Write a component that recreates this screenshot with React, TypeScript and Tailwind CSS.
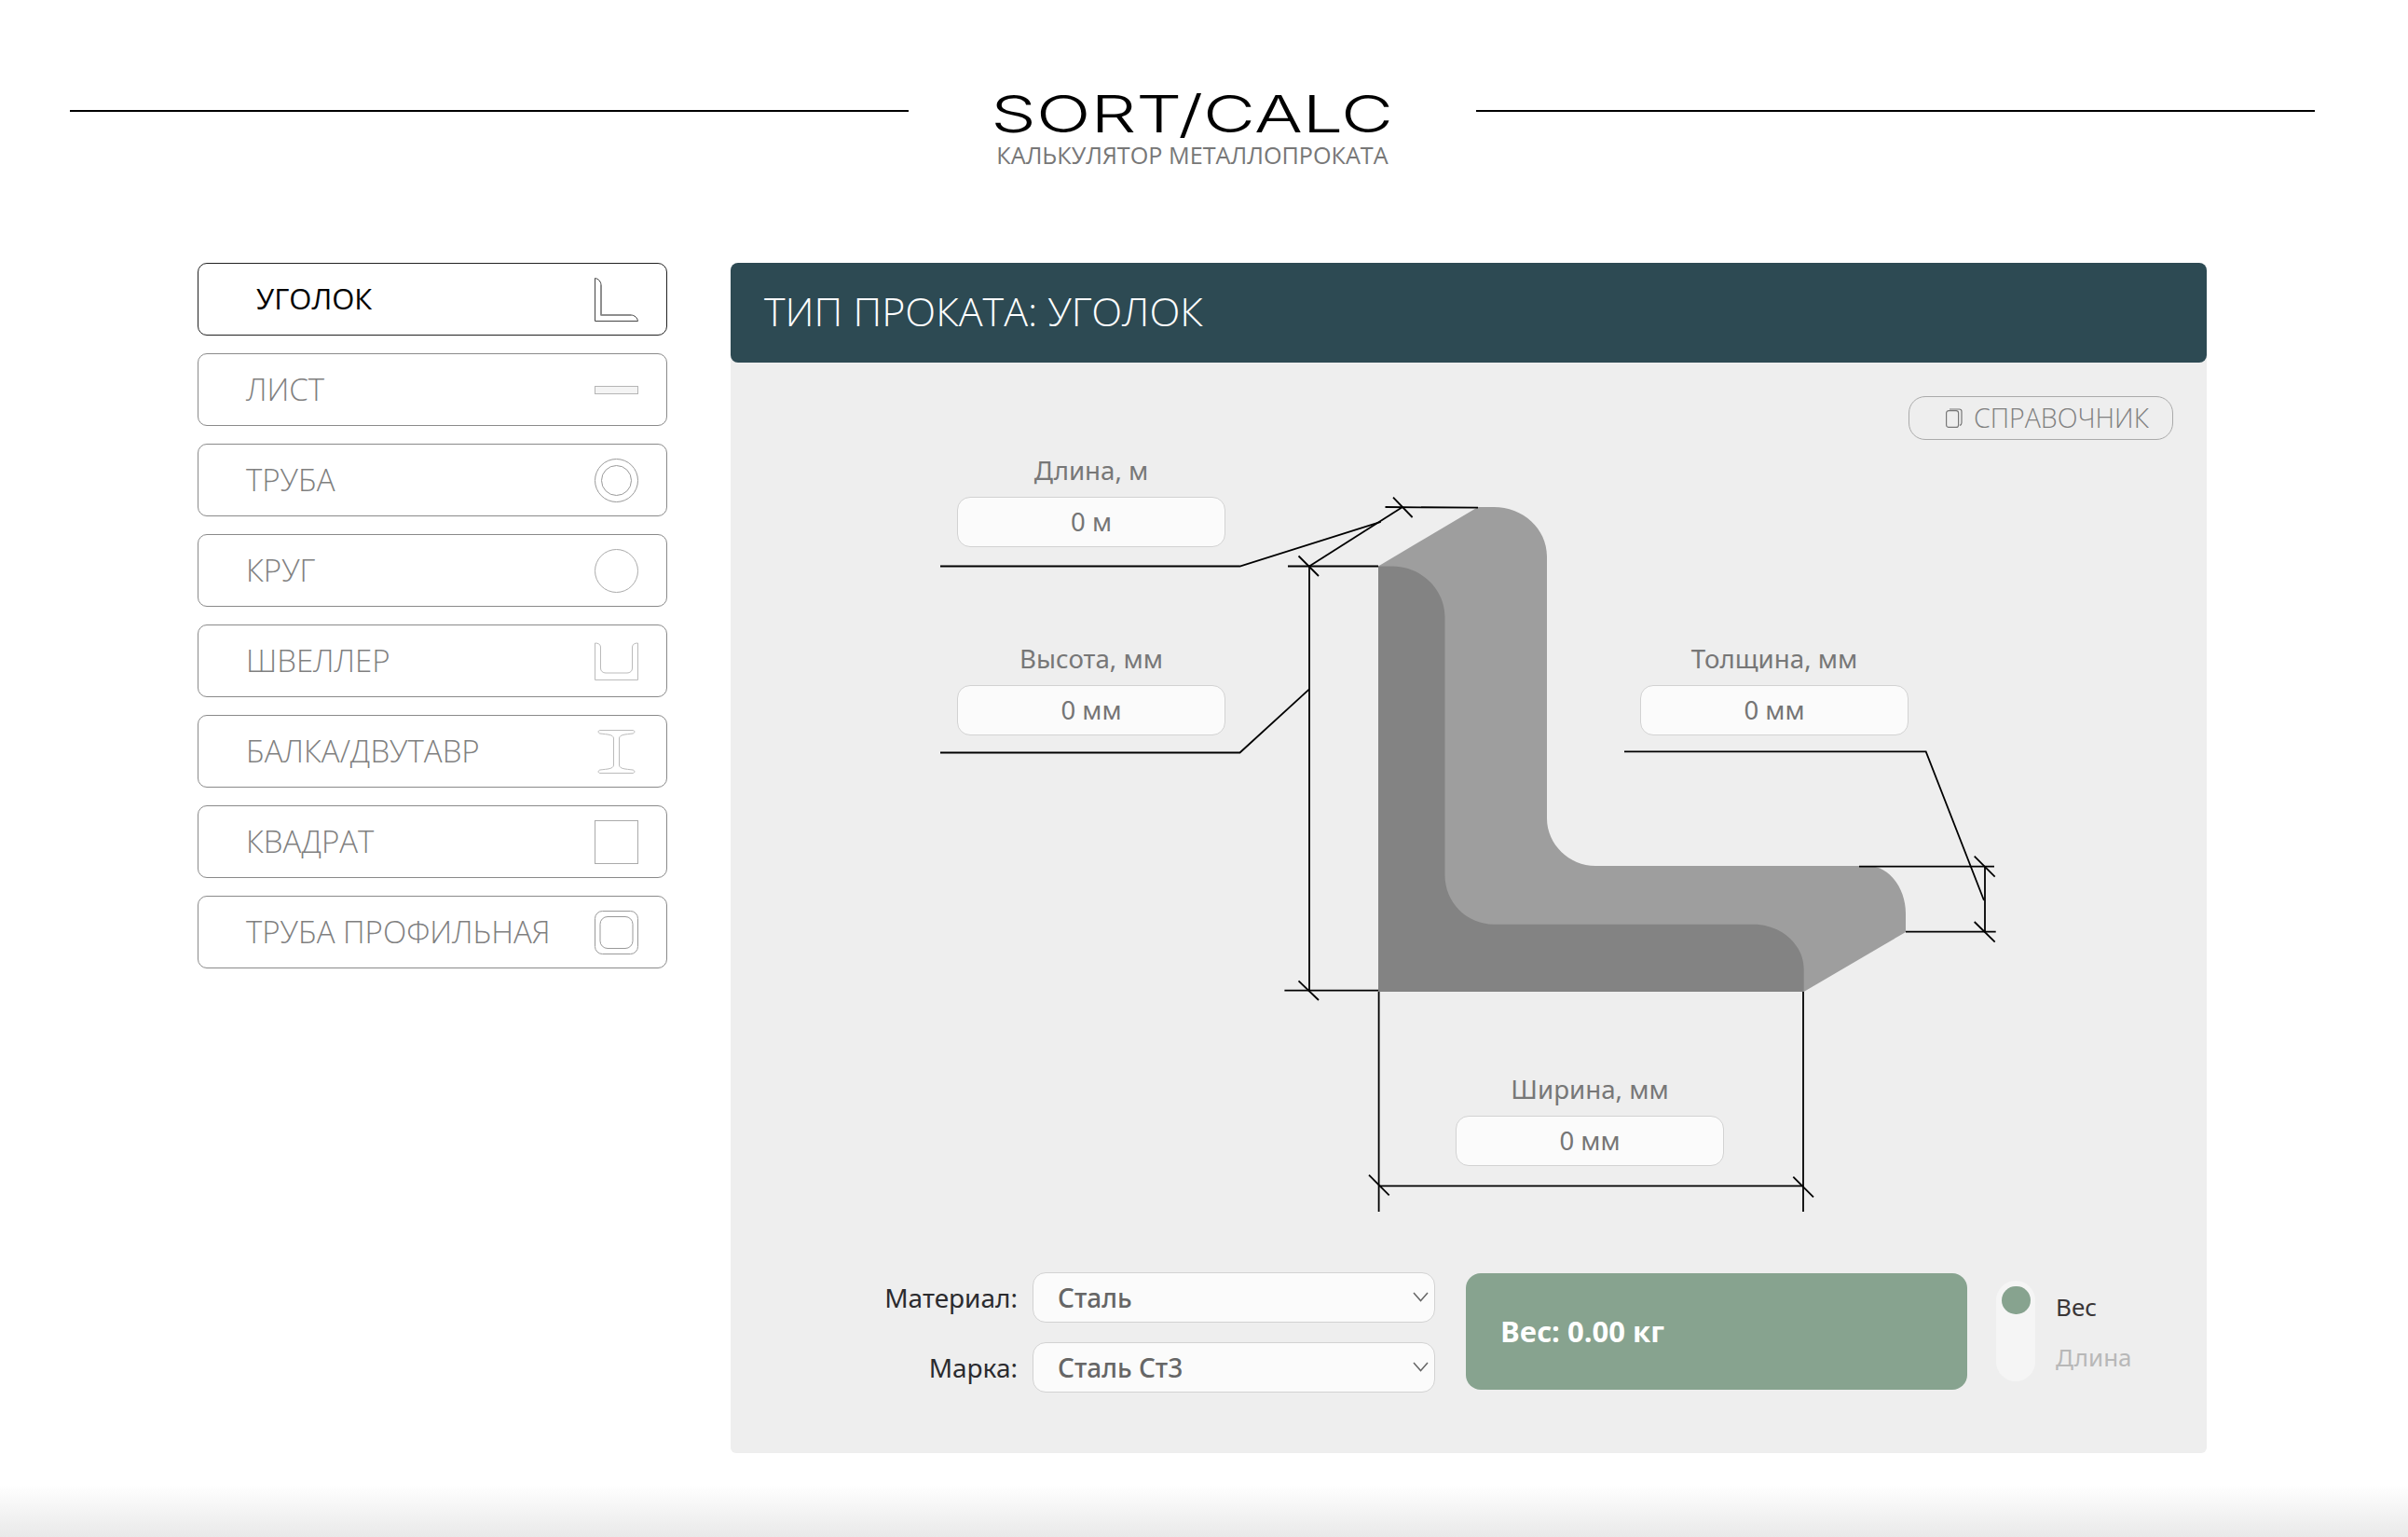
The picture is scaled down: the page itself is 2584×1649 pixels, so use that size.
import { ReactNode } from "react";

const sans = "font-['Open_Sans',sans-serif]";
const ui = "font-['Noto_Sans',sans-serif]";

const AngleIcon = () => (
  <svg width="47" height="47" viewBox="0 0 47 47" fill="none">
    <path d="M.5.5C4 1 7 4 7 8V40H39C43 40 46 43 46.5 46.5H.5Z" stroke="#444" strokeWidth="1" />
    <path d="M7 8V40H39" stroke="#888" strokeWidth="1.5" />
  </svg>
);
const SheetIcon = () => (
  <svg width="47" height="47" viewBox="0 0 47 47" fill="none">
    <rect x=".5" y="19.5" width="46" height="8" fill="#f4f4f4" stroke="#b5b5b5" />
  </svg>
);
const PipeIcon = () => (
  <svg width="47" height="47" viewBox="0 0 47 47" fill="none" stroke="#999">
    <circle cx="23.5" cy="23.5" r="23" />
    <circle cx="23.5" cy="23.5" r="16" />
  </svg>
);
const CircleIcon = () => (
  <svg width="47" height="47" viewBox="0 0 47 47" fill="none" stroke="#aaa">
    <circle cx="23.5" cy="23.5" r="23" />
  </svg>
);
const ChannelIcon = () => (
  <svg width="47" height="47" viewBox="0 0 47 47" fill="none" stroke="#bbb">
    <path d="M.5 4C4 4 6 5 6.5 8V31C6.5 34 9 36 12 36H35C38 36 40.5 34 40.5 31V8C41 5 43 4 46.5 4V43.5H.5Z" />
  </svg>
);
const BeamIcon = () => (
  <svg width="47" height="47" viewBox="0 0 47 47" fill="none" stroke="#bbb">
    <path d="M6 .5H41C43.500.5 43.500 3.500 41 4C33 5 27 5 26.500 9V38C27 42 33 42 41 43C43.500 43.500 43.500 46.500 41 46.500H6C3.500 46.500 3.500 43.500 6 43C14 42 20 42 20.500 38V9C20 5 14 5 6 4C3.500 3.500 3.500.5 6 .5Z" />
  </svg>
);
const SquareIcon = () => (
  <svg width="47" height="47" viewBox="0 0 47 47" fill="none" stroke="#aaa">
    <rect x=".5" y=".5" width="46" height="46" />
  </svg>
);
const ProfileIcon = () => (
  <svg width="47" height="47" viewBox="0 0 47 47" fill="none" stroke="#999">
    <rect x=".5" y=".5" width="46" height="46" rx="8" />
    <rect x="6" y="6.500" width="35" height="34" rx="8" />
  </svg>
);

const items: { name: string; icon: ReactNode; active?: boolean }[] = [
  { name: "УГОЛОК", icon: <AngleIcon />, active: true },
  { name: "ЛИСТ", icon: <SheetIcon /> },
  { name: "ТРУБА", icon: <PipeIcon /> },
  { name: "КРУГ", icon: <CircleIcon /> },
  { name: "ШВЕЛЛЕР", icon: <ChannelIcon /> },
  { name: "БАЛКА/ДВУТАВР", icon: <BeamIcon /> },
  { name: "КВАДРАТ", icon: <SquareIcon /> },
  { name: "ТРУБА ПРОФИЛЬНАЯ", icon: <ProfileIcon /> },
];

// dimension lines, in page coordinates
const lines: number[][] = [
  [1009, 607.5, 1330.5, 607.5, 1481.7, 559.8],
  [1405, 607.5, 1505, 544],
  [1393.5, 596.5, 1415, 618],
  [1495, 533.7, 1515.6, 555],
  [1486.5, 544, 1586, 544.7],
  [1382, 607.5, 1479, 607.5],
  [1405, 607.5, 1405, 1062.7],
  [1393.5, 1052.4, 1415, 1073],
  [1378.4, 1062.7, 1479, 1062.7],
  [1009, 807.5, 1330.5, 807.5, 1405, 739.4],
  [1743, 806.3, 2066.7, 806.3, 2129, 966],
  [1995, 929.7, 2140, 929.7],
  [2045, 999.7, 2141.7, 999.7],
  [2130, 930, 2130, 1000],
  [2118.7, 918.7, 2140.7, 940.7],
  [2118.7, 989, 2140.7, 1010.7],
  [1479.6, 1064, 1479.6, 1300],
  [1935, 1064, 1935, 1300],
  [1479.6, 1272.3, 1935, 1272.3],
  [1469, 1260.7, 1490.7, 1282.3],
  [1924.3, 1262.7, 1946, 1284.3],
];

function Diagram() {
  return (
    <svg className="absolute inset-0" width="1584" height="976" viewBox="784 389 1584 976" fill="none">
      <path
        d="M1479 607.5L1586 544H1603C1634 544 1660 567 1660 597V878C1660 906 1684 929 1712 929H2005C2027 929 2045 953 2045 980V1000L1935.7 1064H1479Z"
        fill="#9e9e9e"
      />
      <path
        d="M1479 607.5H1494C1525 607.5 1550.5 632 1550.5 662V939C1550.5 968 1574 991.7 1603 991.7H1881.7C1911 991.7 1935.7 1013 1935.7 1040V1064H1479Z"
        fill="#838383"
      />
      {lines.map((l, i) => (
        <polyline key={i} points={l.join(" ")} stroke="#000" strokeWidth="1.8" />
      ))}
    </svg>
  );
}

function Field({ label, value, className }: { label: string; value: string; className: string }) {
  return (
    <div className={`absolute w-[288px] ${className}`}>
      <div className={`h-[37px] mb-[10px] text-center text-[27.700px] leading-[37px] text-[#777] ${ui}`}>{label}</div>
      <input
        readOnly
        value={value}
        className={`block w-full h-[54px] rounded-[14px] border border-[#d2d2d2] bg-[#fbfbfb] pb-[1px] text-center text-[27.500px] text-[#757575] outline-none ${ui}`}
      />
    </div>
  );
}

function Select({ value }: { value: string }) {
  return (
    <div className="relative h-[54px] w-[432px]">
      <select
        value={value}
        onChange={() => {}}
        className={`block h-full w-full appearance-none rounded-[14px] border border-[#d2d2d2] bg-[#fbfbfb] pl-[26px] text-[28px] font-medium text-[#666] outline-none ${ui}`}
      >
        <option>{value}</option>
      </select>
      <svg className="absolute right-[7px] top-[21px]" width="17" height="11" viewBox="0 0 17 11" fill="none" stroke="#666" strokeWidth="1.5">
        <path d="M1 1L8.500 9.500L16 1" />
      </svg>
    </div>
  );
}

export default function App() {
  return (
    <div className="flex h-[1649px] flex-col overflow-hidden bg-white">
      <header className="flex items-start pl-[75px] pr-[100px] pt-[102px]">
        <div className="mt-[16px] h-[2px] flex-1 bg-black" />
        <div className="flex w-[609px] flex-col items-center">
          <div className="inline-block origin-center scale-x-[1.4] font-['Inter',sans-serif] text-[55px] font-light leading-[40px] text-black">
            SORT/CALC
          </div>
          <div className={`mt-[14px] mb-[3px] text-[25.200px] leading-[20px] text-[#777] ${sans}`}>КАЛЬКУЛЯТОР МЕТАЛЛОПРОКАТА</div>
        </div>
        <div className="mt-[16px] h-[2px] flex-1 bg-black" />
      </header>

      <main className="mt-[103px] flex items-start gap-[68px] pl-[212px]">
        <nav className="flex w-[504px] flex-col gap-[19px]">
          {items.map((it) => (
            <div
              key={it.name}
              className={`flex h-[78px] items-center justify-between rounded-[10px] border pr-[30px] ${
                it.active ? "border-[#222] pl-[62px] text-black" : "border-[#8a8a8a] pl-[51px] text-[#808080]"
              }`}
            >
              <span className={`${it.active ? "pb-[2px] text-[31px] font-normal" : "text-[33px] font-light"} ${sans}`}>{it.name}</span>
              {it.icon}
            </div>
          ))}
        </nav>

        <section className="w-[1584px]">
          <div className={`relative z-10 flex h-[107px] items-center rounded-[8px] bg-[#2d4a53] pb-[3px] pl-[36px] text-[43px] font-light text-white ${sans}`}>
            ТИП ПРОКАТА: УГОЛОК
          </div>
          <div className="-mt-[10px] h-[1180px] rounded-b-[6px] bg-[#eeeeee] pt-[10px]">
            <div className="relative h-[976px]">
              <Diagram />
              <Field label="Длина, м" value="0 м" className="left-[243px] top-[97px]" />
              <Field label="Высота, мм" value="0 мм" className="left-[243px] top-[299px]" />
              <Field label="Толщина, мм" value="0 мм" className="left-[976px] top-[299px]" />
              <Field label="Ширина, мм" value="0 мм" className="left-[778px] top-[761px]" />
              <button className={`absolute right-[36px] top-[36px] flex h-[47px] w-[284px] items-center justify-start gap-[12px] rounded-[18px] border border-[#aaa] pl-[39px] text-[28.500px] font-light text-[#808080] ${sans}`}>
                <svg width="18" height="21" viewBox="0 0 18 21" fill="none" stroke="#777" strokeWidth="1.2">
                  <rect x=".6" y="2.600" width="13" height="17.800" rx="2.500" />
                  <path d="M4 1H14.500C16 1 17 2 17 3.500V15.500C17 17 16.300 18 15 18.500" />
                </svg>
                СПРАВОЧНИК
              </button>
            </div>

            <div className="flex items-start pl-[170px]">
              <div className={`flex w-[138px] flex-col items-end gap-[21px] text-[28px] text-[#2b2b2e] ${ui}`}>
                <label className="flex h-[54px] items-center">Материал:</label>
                <label className="flex h-[54px] items-center">Марка:</label>
              </div>
              <div className="ml-[16px] flex flex-col gap-[21px]">
                <Select value="Сталь" />
                <Select value="Сталь Ст3" />
              </div>
              <div className={`ml-[33px] mt-[1px] flex h-[125px] w-[538px] items-center rounded-[16px] bg-[#87a38f] pl-[37px] text-[31px] font-bold text-white ${sans}`}>
                Вес: 0.00 кг
              </div>
              <div className="relative ml-[31px] mt-[9px] h-[108px] w-[42px] rounded-full bg-[#f5f5f5]">
                <div className="absolute left-[6px] top-[6px] h-[30px] w-[31px] rounded-full bg-[#87a38f]" />
              </div>
              <div className={`ml-[22px] mt-[19px] flex flex-col gap-[18px] text-[26px] leading-[36px] ${ui}`}>
                <span className="text-[#3a3637]">Вес</span>
                <span className="text-[#b8b8b8]">Длина</span>
              </div>
            </div>
          </div>
        </section>
      </main>

      <div className="mt-auto h-[56px] bg-gradient-to-b from-white to-[#e9e9e9]" />
    </div>
  );
}
